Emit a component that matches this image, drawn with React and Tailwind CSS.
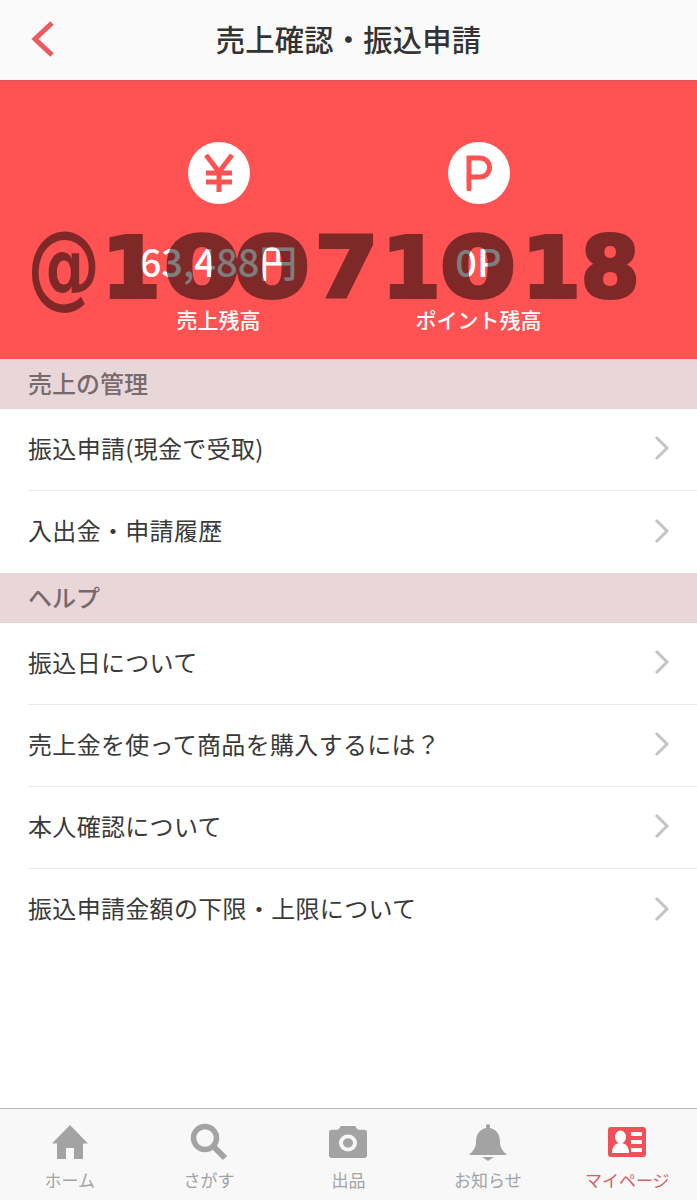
import React from 'react';

const cjk = { fontFamily: '"Noto Sans CJK JP", "Liberation Sans", sans-serif' };

function Chevron() {
  return (
    <svg width="16" height="26" viewBox="0 0 16 26" fill="none" className="mb-[3px] shrink-0">
      <path d="M2 2l11 11L2 24" stroke="#c4c4c4" strokeWidth="3" />
    </svg>
  );
}

function SectionHeader({ title }) {
  return (
    <div className="flex h-[50px] items-center bg-[#e8d6d9] pb-[3px] pl-[28px] text-[24px] font-medium text-[#77696c]">
      {title}
    </div>
  );
}

function Row({ label, last }) {
  return (
    <div className="pl-[28px] bg-white">
      <div className={`flex h-[82px] items-center justify-between pr-[27px] ${last ? '' : 'border-b border-[#e9e9e9]'}`}>
        <span className="pb-[4px] text-[24px] text-[#3a3a3a] tracking-[0.32px]">{label}</span>
        <Chevron />
      </div>
    </div>
  );
}

function Balance({ icon, value, label }) {
  return (
    <div className="flex w-[260px] flex-col items-center">
      <div className="flex h-[62px] w-[62px] items-center justify-center rounded-full bg-white">{icon}</div>
      <div className="mt-[33px] text-[38px] leading-[48px] font-medium text-white">{value}</div>
      <div className="mt-[19px] text-[21px] leading-[30px] font-medium text-white">{label}</div>
    </div>
  );
}

function Tab({ icon, label, active }) {
  return (
    <div className="flex w-[139.4px] flex-col items-center">
      <div className="flex h-[42px] items-center justify-center">{icon}</div>
      <span className={`mt-[4px] text-[17px] leading-[26px] ${active ? 'text-[#d9606a]' : 'text-[#a3a3a3]'}`}>{label}</span>
    </div>
  );
}

const homeIcon = (
  <svg width="36" height="34" viewBox="0 0 36 34" fill="#a3a3a3">
    <path d="M18 0L36 18.5H31V34H22V23H14V34H5V18.5H0Z" />
  </svg>
);

const searchIcon = (
  <svg width="38" height="38" viewBox="0 0 38 38" fill="none" stroke="#a3a3a3">
    <circle cx="15" cy="15" r="11.5" strokeWidth="5.5" />
    <path d="M23.5 23.5L35 35" strokeWidth="6" />
  </svg>
);

const cameraIcon = (
  <svg width="38" height="32" viewBox="0 0 38 34" preserveAspectRatio="none">
    <path fillRule="evenodd" fill="#a3a3a3" d="M3 4h6l3-4h14l3 4h6a3 3 0 0 1 3 3v24a3 3 0 0 1-3 3H3a3 3 0 0 1-3-3V7a3 3 0 0 1 3-3zM19 9a9 9 0 1 0 0 18 9 9 0 0 0 0-18zM19 13a5 5 0 1 1 0 10 5 5 0 0 1 0-10z" />
  </svg>
);

const bellIcon = (
  <svg width="38" height="38" viewBox="0 0 38 38" fill="#a3a3a3">
    <path d="M17 3a2 2 0 0 1 4 0v2c7 1.500 10 7 10 14 0 6 3 9 7 13H0c4-4 7-7 7-13C7 12 10 6.500 17 5z" />
    <path d="M13 34h12l-6 4z" />
  </svg>
);

const profileIcon = (
  <svg width="38" height="30" viewBox="0 0 38 30">
    <rect width="38" height="30" rx="3" fill="#f25058" />
    <ellipse cx="12.500" cy="10" rx="5.500" ry="6.500" fill="#fff" />
    <path d="M4 26c0-6 3-10 8.500-10s8.500 4 8.500 10z" fill="#fff" />
    <path d="M23 5h11v4H23zM23 13h11v4H23zM23 21h11v4H23z" fill="#fff" />
  </svg>
);

const watermark = [
  { c: '1', box: 'w-[62px]' },
  { c: '0', box: 'w-[70px] scale-x-[1.3]' },
  { c: '0', box: 'w-[81px] scale-x-[1.3]' },
  { c: '7', box: 'w-[67px] scale-x-[1.08]' },
  { c: '1', box: 'w-[58px]' },
  { c: '0', box: 'w-[82px] scale-x-[1.3]' },
  { c: '1', box: 'w-[59px]' },
  { c: '8', box: 'w-[60px]' },
];

export default function App() {
  return (
    <div className="relative flex h-[1200px] w-[697px] flex-col overflow-hidden bg-white" style={cjk}>
      {/* Header */}
      <header className="relative flex h-[81px] shrink-0 items-center justify-center border-b border-[#e2545a] bg-[#fafafa]">
        <svg width="24" height="36" viewBox="0 0 24 36" fill="none" className="absolute left-[31px] top-[21px]">
          <path d="M21 2L4 18l17 16" stroke="#ea5a60" strokeWidth="5" />
        </svg>
        <h1 className="pb-[2px] text-[29.300px] font-medium text-[#333] tracking-[0.2px]">売上確認・振込申請</h1>
      </header>

      {/* Balance */}
      <section className="flex h-[278px] shrink-0 justify-center bg-[#ff5252] pt-[61px]">
        <Balance
          value="63,488円"
          label="売上残高"
          icon={
            <svg width="32" height="38" viewBox="0 0 32 38" fill="none" stroke="#ff5252" strokeWidth="5">
              <path d="M3 1l13 17L29 1M16 18v20M3 19h26M3 28h26" />
            </svg>
          }
        />
        <Balance
          value="0P"
          label="ポイント残高"
          icon={
            <svg width="26" height="36" viewBox="0 0 26 36" fill="none" stroke="#ff5252" strokeWidth="5" strokeLinecap="round">
              <path d="M3 34V3h11a8.500 8.500 0 0 1 0 19H3" />
            </svg>
          }
        />
      </section>

      {/* Lists */}
      <SectionHeader title="売上の管理" />
      <Row label="振込申請(現金で受取)" />
      <Row label="入出金・申請履歴" last />
      <SectionHeader title="ヘルプ" />
      <Row label="振込日について" />
      <Row label="売上金を使って商品を購入するには？" />
      <Row label="本人確認について" />
      <Row label="振込申請金額の下限・上限について" last />

      {/* Tab bar */}
      <nav className="mt-auto flex h-[92px] shrink-0 items-start border-t border-[#b9b9b9] bg-[#f8f8f8] pt-[12px]">
        <Tab icon={homeIcon} label="ホーム" />
        <Tab icon={searchIcon} label="さがす" />
        <Tab icon={cameraIcon} label="出品" />
        <Tab icon={bellIcon} label="お知らせ" />
        <Tab icon={profileIcon} label="マイページ" active />
      </nav>

      {/* Watermark */}
      <div
        className="pointer-events-none absolute left-[27px] top-[211px] flex items-baseline text-[84px] leading-[110px] font-bold whitespace-nowrap text-black opacity-50 [-webkit-text-stroke:4px_black]"
        style={{ fontFamily: '"DejaVu Sans", sans-serif' }}
      >
        <span className="inline-block w-[75px] origin-left scale-x-[0.8] text-[92px] [-webkit-text-stroke:0px_black]">@</span>
        {watermark.map((g, i) => (
          <span key={i} className={`inline-block origin-left ${g.box}`}>{g.c}</span>
        ))}
      </div>
    </div>
  );
}
